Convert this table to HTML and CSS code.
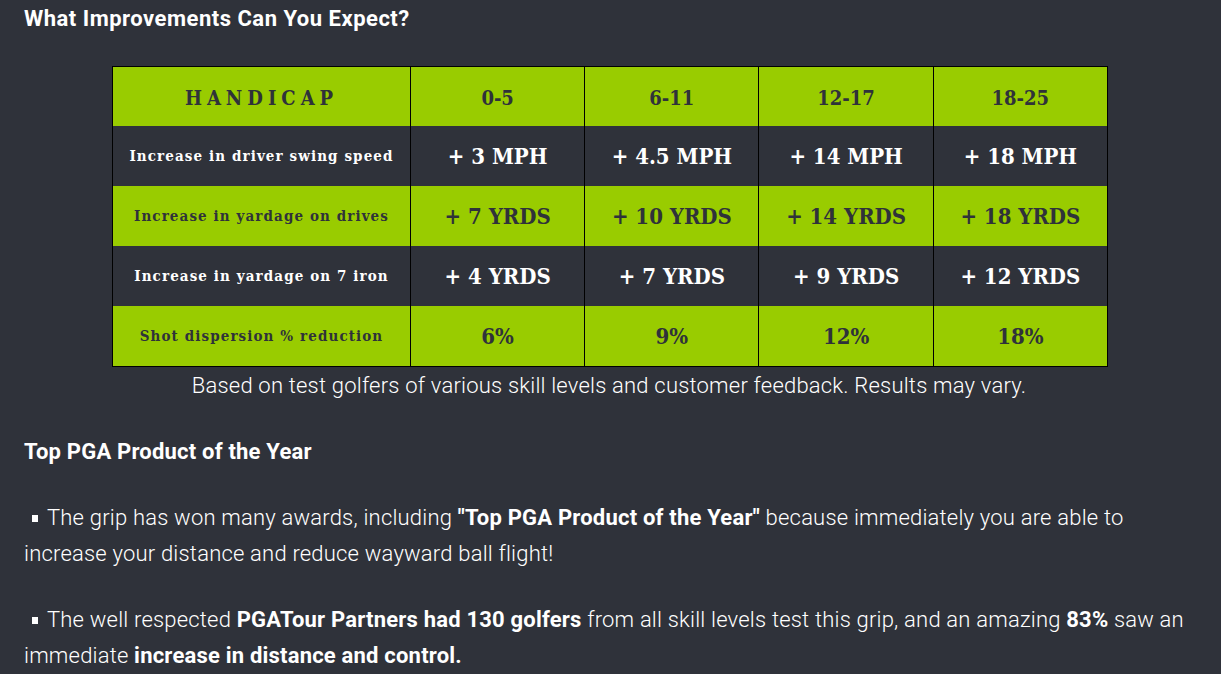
FILE: index.html
```html
<!DOCTYPE html>
<html>
<head>
<meta charset="utf-8">
<link rel="stylesheet" href="styles.css">
</head>
<body>
<div class="page">
  <h2 class="title">What Improvements Can You Expect?</h2>
  <div class="table-wrap">
    <table class="stats">
      <tr class="green head">
        <th class="label hcap">HANDICAP</th>
        <th>0-5</th><th>6-11</th><th>12-17</th><th>18-25</th>
      </tr>
      <tr class="dark">
        <td class="label">Increase in driver swing speed</td>
        <td>+ 3 MPH</td><td>+ 4.5 MPH</td><td>+ 14 MPH</td><td>+ 18 MPH</td>
      </tr>
      <tr class="green">
        <td class="label">Increase in yardage on drives</td>
        <td>+ 7 YRDS</td><td>+ 10 YRDS</td><td>+ 14 YRDS</td><td>+ 18 YRDS</td>
      </tr>
      <tr class="dark">
        <td class="label">Increase in yardage on 7 iron</td>
        <td>+ 4 YRDS</td><td>+ 7 YRDS</td><td>+ 9 YRDS</td><td>+ 12 YRDS</td>
      </tr>
      <tr class="green">
        <td class="label">Shot dispersion % reduction</td>
        <td>6%</td><td>9%</td><td>12%</td><td>18%</td>
      </tr>
    </table>
    <p class="caption">Based on test golfers of various skill levels and customer feedback. Results may vary.</p>
  </div>
  <h3 class="sub">Top PGA Product of the Year</h3>
  <p class="para first"><span class="bullet"></span>The grip has won many awards, including <b>"Top PGA Product of the Year"</b> because immediately you are able to increase your distance and reduce wayward ball flight!</p>
  <p class="para"><span class="bullet"></span>The well respected <b>PGATour Partners had 130 golfers</b> from all skill levels test this grip, and an amazing <b>83%</b> saw an immediate <b>increase in distance and control.</b></p>
</div>
</body>
</html>
```
FILE: styles.css
```css
html, body {
  margin: 0;
  padding: 0;
  background: #2f323a;
  color: #ffffff;
  font-family: Roboto, "Liberation Sans", sans-serif;
}
.page {
  padding: 0 27px 0 24px;
}
.title {
  margin: 0;
  padding-top: 5px;
  font-size: 22px;
  line-height: 28px;
  font-weight: 700;
  letter-spacing: 0.5px;
}
.table-wrap {
  margin-top: 33px;
  display: flex;
  flex-direction: column;
  align-items: center;
}
.stats {
  border-collapse: collapse;
  border: 1px solid #000;
  width: 996px;
  margin-left: 2px;
  font-family: "DejaVu Serif Condensed", "DejaVu Serif", serif;
  font-stretch: condensed;
  font-weight: 700;
}
.stats th, .stats td {
  height: 60px;
  padding: 0;
  text-align: center;
  border-left: 1px solid #000;
  border-right: 1px solid #000;
  font-size: 22px;
  width: 174px;
}
.stats .label {
  width: 298px;
  font-size: 15px;
  letter-spacing: 1.1px;
}
.stats .hcap {
  font-size: 20px;
  letter-spacing: 5px;
}
.head th {
  font-size: 20px;
  padding-top: 3px;
  height: 56px;
}
.green {
  background: #99cc00;
  color: #2f323a;
}
.dark {
  background: #2f323a;
  color: #ffffff;
}
.caption {
  margin: 3px 0 0;
  font-size: 22px;
  line-height: 32px;
  font-weight: 300;
  letter-spacing: 0.2px;
}
.sub {
  margin: 35px 0 0;
  font-size: 22px;
  line-height: 30px;
  font-weight: 700;
  letter-spacing: 0.2px;
}
.para {
  margin: 30px 0 0;
  font-size: 22px;
  line-height: 36px;
  font-weight: 300;
  letter-spacing: 0.2px;
}
.para.first {
  margin-top: 33px;
}
.para b {
  font-weight: 700;
}
.bullet {
  display: inline-block;
  width: 6px;
  height: 7px;
  background: #ffffff;
  margin: 0 9px 1px 8px;
  vertical-align: middle;
}
```
